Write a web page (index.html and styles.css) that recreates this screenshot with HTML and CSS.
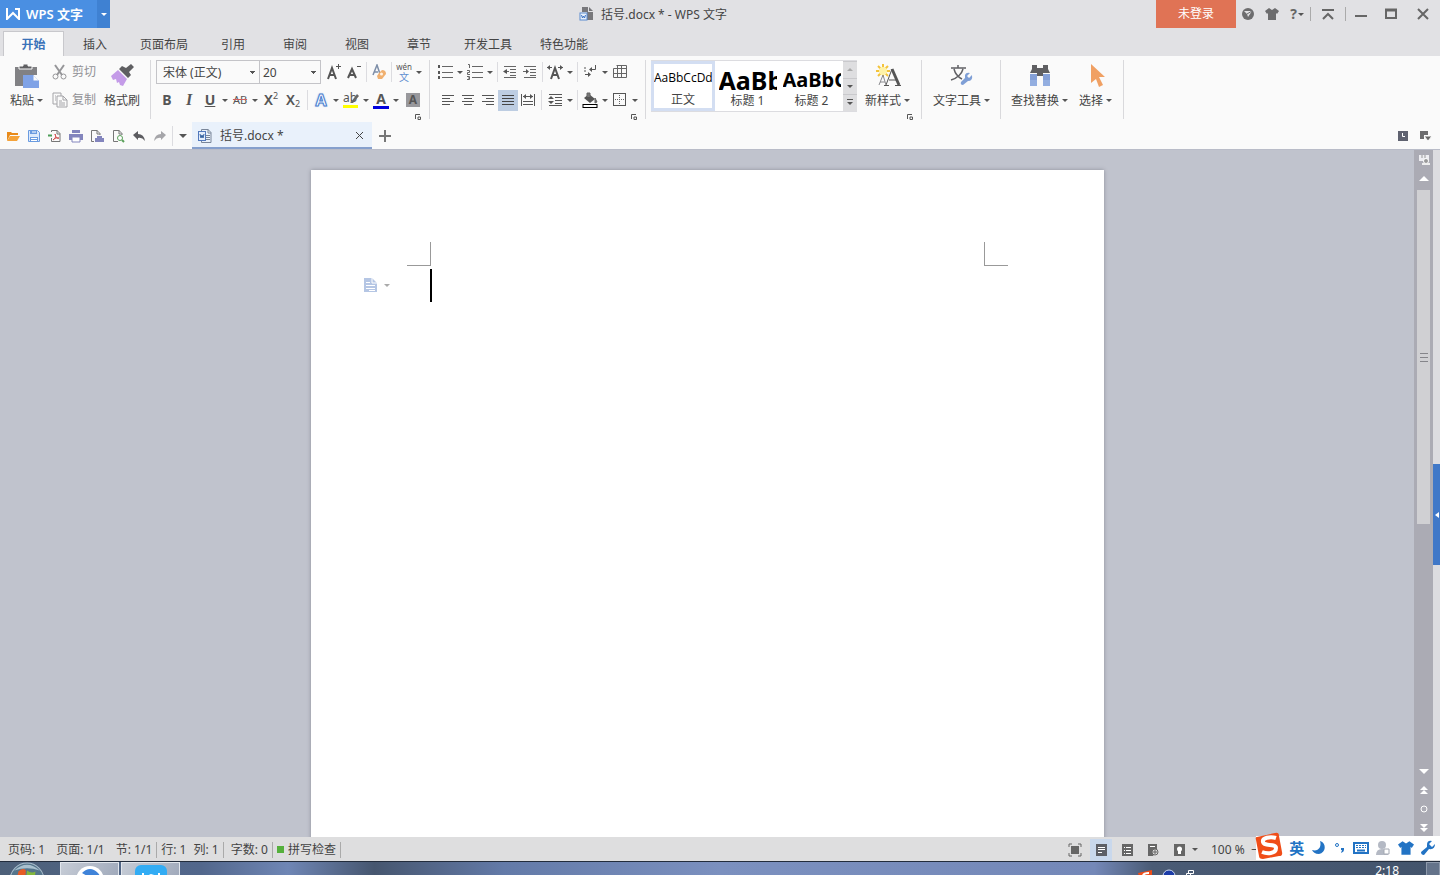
FILE: index.html
```html
<!DOCTYPE html>
<html lang="zh-CN">
<head>
<meta charset="utf-8">
<title>括号.docx * - WPS 文字</title>
<link rel="stylesheet" href="styles.css">
</head>
<body>
<header class="titlebar">
  <button class="brand"><svg width="14" height="12" viewBox="0 0 14 12"><path d="M1 0v11l6-6 6 6V1H9" fill="none" stroke="#fff" stroke-width="2"/></svg><span>WPS 文字</span></button>
  <button class="brand-menu" aria-label="菜单"><i class="tri"></i></button>
  <div class="title"><svg width="16" height="16" viewBox="0 0 16 16"><path d="M3 1h6v5h5v8H8V6H3z" fill="#77777b"/><path d="M10 1l4 4h-4z" fill="#77777b"/><rect x="1" y="7" width="7" height="7" fill="#e8f0fb" stroke="#5b8bd0"/><path d="M2.500 9l1 3 1-2 1 2 1-3" fill="none" stroke="#3a72c4"/></svg><h1>括号.docx * - WPS 文字</h1></div>
  <button class="login">未登录</button>
  <nav class="window-tools">
    <button aria-label="皮肤中心"><svg width="14" height="14" viewBox="0 0 14 14"><circle cx="7" cy="7" r="6" fill="#6c6c6e"/><path d="M3 4l8 0-4 6-1-3z" fill="#e1e1e4"/><path d="M6 7l5-3" stroke="#6c6c6e"/></svg></button>
    <button aria-label="换肤"><svg width="14" height="14" viewBox="0 0 14 14"><path d="M4 1l3 2 3-2 4 3-2 3-1-1v7H3V6L2 7 0 4z" fill="#6c6c6e"/></svg></button>
    <button class="help" aria-label="帮助"><b>?</b><i class="tri"></i></button>
    <span class="tool-line"></span>
    <button class="fold" aria-label="折叠功能区"><svg width="14" height="14" viewBox="0 0 14 14"><path d="M1 3h12M2 12l5-5 5 5" fill="none" stroke="#666" stroke-width="2"/></svg></button>
    <span class="tool-line"></span>
    <button class="win" aria-label="最小化"><svg width="14" height="14" viewBox="0 0 14 14"><path d="M1 9h12" stroke="#666" stroke-width="2"/></svg></button>
    <button class="win" aria-label="最大化"><svg width="14" height="14" viewBox="0 0 14 14"><path d="M2 3h10v8H2z" fill="none" stroke="#666" stroke-width="2"/><path d="M1 3h12" stroke="#666" stroke-width="3"/></svg></button>
    <button class="win close" aria-label="关闭"><svg width="14" height="14" viewBox="0 0 14 14"><path d="M2 2l10 10M12 2L2 12" stroke="#666" stroke-width="2"/></svg></button>
  </nav>
</header>

<nav class="menu">
  <button class="active">开始</button><button>插入</button><button class="wide">页面布局</button><button>引用</button><button>审阅</button><button>视图</button><button>章节</button><button class="wide">开发工具</button><button class="wide">特色功能</button>
</nav>

<section class="ribbon">
  <div class="group clipboard">
    <button class="big"><svg width="26" height="26" viewBox="0 0 26 26"><path d="M1 4h22v8H9v11H1z" fill="#818184"/><path d="M5 6V3h4V1h5v2h4v3z" fill="#5f5f62" stroke="#fafafa"/><path d="M9 12h10l6 6v7H9z" fill="#7fa2e6"/><path d="M19 12v6h6" fill="#fafafa" stroke="#7fa2e6"/></svg><span>粘贴<i class="tri"></i></span></button>
    <div class="stack">
      <button class="muted"><svg width="16" height="16" viewBox="0 0 16 16"><path d="M3 1l7 10M12 1L5 11" stroke="#969699" stroke-width="2"/><circle cx="3.500" cy="12.500" r="2.500" fill="none" stroke="#969699"/><circle cx="11.500" cy="12.500" r="2.500" fill="none" stroke="#969699"/></svg>剪切</button>
      <button class="muted"><svg width="16" height="16" viewBox="0 0 16 16"><path d="M5 12H1V1h8v3M5 4h6l4 4v7H5zM11 4v4h4M7 9h3M7 11h6M7 13h6M3 4h1M3 6h1M3 8h1" fill="none" stroke="#a4a4a8"/></svg>复制</button>
    </div>
    <button class="big"><svg width="26" height="26" viewBox="0 0 26 26"><path d="M22 1l3 3-5 5 2 3-3 3-9-9 3-3 4 2z" fill="#5f5f62"/><path d="M9 7l9 9-4 7-3-1-1-3-2 1-1-4-3 1-2-4z" fill="#c49be8"/></svg><span>格式刷</span></button>
  </div>

  <div class="group font">
    <div class="row">
      <select class="font-name" aria-label="字体"><option>宋体 (正文)</option></select><select class="font-size" aria-label="字号"><option>20</option></select>
      <button class="tool first" aria-label="增大字号"><svg width="16" height="16" viewBox="0 0 16 16"><path d="M2 15L6 4l4 11M3 11h6" fill="none" stroke="#555" stroke-width="2"/><path d="M12.500 0v5M10 2.500h5" stroke="#555"/></svg></button>
      <button class="tool" aria-label="减小字号"><svg width="16" height="16" viewBox="0 0 16 16"><path d="M2 14L6 5l4 9M3 11h6" fill="none" stroke="#555" stroke-width="2"/><path d="M11 2.500h4" stroke="#555"/></svg></button>
      <i class="line"></i>
      <button class="tool" aria-label="清除格式"><svg width="16" height="16" viewBox="0 0 16 16"><path d="M2 11L6 1l3 9M3 8h4" fill="none" stroke="#7d8ea8" stroke-width="1.500"/><path d="M8 9l3-3q4 0 4 4l-4 5H7l-1-3z" fill="#f0b070"/><circle cx="10.500" cy="10" r="1.500" fill="#fff3e5"/></svg></button>
      <i class="line"></i>
      <button class="tool pinyin" aria-label="拼音指南"><small>wén</small><em>文</em></button><button class="caret" aria-label="更多拼音"></button>
    </div>
    <div class="row">
      <button class="tool w22 letter"><b>B</b></button><button class="tool w22 letter italic"><b>I</b></button><button class="tool letter under"><b>U</b></button><button class="caret" aria-label="下划线样式"></button>
      <button class="tool strike">AB</button><button class="caret" aria-label="删除线样式"></button>
      <button class="tool w22 script">X<sup>2</sup></button><button class="tool w22 script">X<sub>2</sub></button>
      <i class="line w7"></i>
      <button class="tool outline-a">A</button><button class="caret" aria-label="文字效果"></button>
      <button class="tool" aria-label="突出显示"><svg width="18" height="18" viewBox="0 0 18 18"><text x="1" y="11" class="svg-ab">ab</text><path d="M9 11l6-8 2 2-6 7H8z" fill="#666"/><path d="M1 14h15v3H1z" fill="#ff0"/></svg></button><button class="caret" aria-label="突出颜色"></button>
      <button class="tool color-a">A</button><button class="caret" aria-label="字体颜色选择"></button>
      <button class="tool w24"><span class="shade-a">A</span></button>
    </div>
    <button class="launcher" aria-label="字体设置"><svg width="6" height="6" viewBox="0 0 6 6"><path d="M.5 5V.5H5M3 3h2.500v2.500H3z" fill="none" stroke="#555"/></svg></button>
  </div>

  <div class="group para">
    <div class="row">
      <button class="tool" aria-label="项目符号"><svg width="16" height="16" viewBox="0 0 16 16"><path d="M5 2.500h11M5 8.500h11M5 13.500h11" stroke="#666"/><path d="M1 1h2v3H1zM1 7h2v3H1zM1 12h2v3H1z" fill="#555"/></svg></button><button class="caret" aria-label="更多项目符号"></button>
      <button class="tool" aria-label="编号"><svg width="16" height="16" viewBox="0 0 16 16"><path d="M5 2.500h11M5 8.500h11M5 13.500h11M1 .5h1.500V4M0 6.500h2.500v2H.5v2H3M0 12.500h2.500v3H0M1 14h1" fill="none" stroke="#666"/></svg></button><button class="caret" aria-label="更多编号"></button>
      <i class="line"></i>
      <button class="tool" aria-label="减少缩进"><svg width="14" height="14" viewBox="0 0 14 14"><path d="M1 1.500h12M7 4.500h6M7 7.500h6M7 10.500h6M1 12.500h12M1 6.500h5" stroke="#666"/><path d="M0 6.500L4 4v5z" fill="#555"/></svg></button>
      <button class="tool" aria-label="增加缩进"><svg width="14" height="14" viewBox="0 0 14 14"><path d="M1 1.500h12M7 4.500h6M7 7.500h6M7 10.500h6M1 12.500h12M0 6.500h4" stroke="#666"/><path d="M6 6.500L3 4v5z" fill="#555"/></svg></button>
      <i class="line"></i>
      <button class="tool" aria-label="字符缩放"><svg width="16" height="16" viewBox="0 0 16 16"><path d="M4 15L8 4l4 11M5 11h6" fill="none" stroke="#555" stroke-width="2"/><path d="M0 3.500h5M11 3.500h5" stroke="#555"/><path d="M0 3.500L3 1v5zM16 3.500L13 1v5z" fill="#555"/></svg></button><button class="caret" aria-label="更多缩放"></button>
      <i class="line"></i>
      <button class="tool" aria-label="换行标记"><svg width="16" height="14" viewBox="0 0 16 14"><path d="M13.500 0v4.500H8M3 9.500h4M2 3h2M2 6h2" fill="none" stroke="#555"/><path d="M7 4.500L10 2v5zM9 9.500L6 7v5z" fill="#555"/></svg></button><button class="caret" aria-label="更多标记"></button>
      <button class="tool" aria-label="插入表格"><svg width="16" height="16" viewBox="0 0 16 16"><path d="M4.500 1.500h10v12H1.500v-9h13M1.500 9.500h13M5.500 1v12M9.500 1v12" fill="none" stroke="#666"/></svg></button>
    </div>
    <div class="row aligns">
      <button class="tool" aria-label="左对齐"><svg width="14" height="12" viewBox="0 0 14 12"><path d="M1 1.500h12M1 4.500h8M1 7.500h12M1 10.500h8" stroke="#555"/></svg></button>
      <button class="tool" aria-label="居中"><svg width="14" height="12" viewBox="0 0 14 12"><path d="M1 1.500h12M3 4.500h8M1 7.500h12M3 10.500h8" stroke="#555"/></svg></button>
      <button class="tool" aria-label="右对齐"><svg width="14" height="12" viewBox="0 0 14 12"><path d="M1 1.500h12M5 4.500h8M1 7.500h12M5 10.500h8" stroke="#555"/></svg></button>
      <button class="tool on" aria-label="两端对齐"><svg width="14" height="12" viewBox="0 0 14 12"><path d="M1 1.500h12M1 4.500h12M1 7.500h12M1 10.500h12" stroke="#444"/></svg></button>
      <button class="tool" aria-label="分散对齐"><svg width="16" height="14" viewBox="0 0 16 14"><path d="M1.500 1v12M14.500 1v12M3 3.500h10M3 8.500h10M3 11.500h10" stroke="#555"/><path d="M3 3.500L6 1v5zM13 3.500L10 1v5z" fill="#555"/></svg></button>
      <i class="line w7"></i>
      <button class="tool" aria-label="行距"><svg width="14" height="14" viewBox="0 0 14 14"><path d="M1 1.500h13M7 4.500h7M7 7.500h7M7 10.500h7M1 12.500h13" stroke="#555"/><path d="M0 6l3-3 3 3zM0 8l3 3 3-3z" fill="#555"/></svg></button><button class="caret" aria-label="行距选项"></button>
      <i class="line"></i>
      <button class="tool" aria-label="底纹"><svg width="16" height="16" viewBox="0 0 16 16"><path d="M2 6l5-4 6 5-5 4z" fill="#555"/><path d="M5 5V1h3v4M13 6l2 4-2 1z" fill="#777" stroke="#666"/><rect x="1" y="12.500" width="14" height="3" fill="#fff" stroke="#000"/></svg></button><button class="caret" aria-label="底纹颜色"></button>
      <button class="tool" aria-label="边框"><svg width="14" height="14" viewBox="0 0 14 14"><rect x=".5" y=".5" width="12" height="12" fill="none" stroke="#555"/><path d="M6.500 2v10M2 6.500h10" stroke="#666" stroke-dasharray="1 1"/></svg></button><button class="caret" aria-label="边框样式"></button>
    </div>
    <button class="launcher" aria-label="段落设置"><svg width="6" height="6" viewBox="0 0 6 6"><path d="M.5 5V.5H5M3 3h2.500v2.500H3z" fill="none" stroke="#555"/></svg></button>
  </div>

  <div class="group styles">
    <div class="gallery">
      <button class="style chosen"><span class="sample">AaBbCcDd</span><span>正文</span></button>
      <button class="style"><span class="sample h1">AaBb</span><span>标题 1</span></button>
      <button class="style"><span class="sample h2">AaBbC</span><span>标题 2</span></button>
      <div class="gallery-scroll"><button class="dim" aria-label="上一行"><i class="tri up"></i></button><button aria-label="下一行"><i class="tri"></i></button><button aria-label="展开样式"><i class="tri bar"></i></button></div>
    </div>
    <button class="big new-style"><svg width="26" height="26" viewBox="0 0 26 26"><path d="M8 1v13M1 8h14M3 3l10 10M13 3L3 13" stroke="#f3c33c" stroke-width="2"/><circle cx="8" cy="8" r="4" fill="#fff3a8"/><path d="M17 6l7 16" stroke="#555" stroke-width="3"/><path d="M11 22l6-16M14 17h8M9 22.500h5M20 22.500h6" fill="none" stroke="#555"/><path d="M4 22l4-10 3 10M5 19h5" fill="none" stroke="#8a8a8e"/></svg><span>新样式<i class="tri"></i></span></button>
    <button class="launcher" aria-label="样式设置"><svg width="6" height="6" viewBox="0 0 6 6"><path d="M.5 5V.5H5M3 3h2.500v2.500H3z" fill="none" stroke="#555"/></svg></button>
  </div>

  <div class="group texttool">
    <button class="big"><svg width="26" height="26" viewBox="0 0 26 26"><path d="M3 5h15M10 2v3M6 6c1 4 4 8 8 10M15 6c-1 4-5 9-12 11" fill="none" stroke="#606064" stroke-width="1.500"/><path d="M24 12l-3 3-2-2 3-3q-4-1-5 2v3l-4 4q-1 3 2 3l5-4q5 0 4-6z" fill="#7f9fd6"/></svg><span>文字工具<i class="tri"></i></span></button>
  </div>
  <div class="group find">
    <button class="big"><svg width="26" height="26" viewBox="0 0 26 26"><path d="M5 2h5v3h6V2h5v4l2 4h-7v3h-6v-3H3l2-4z" fill="#5f5f62"/><path d="M3 11h7v12H3zM16 11h7v12h-7z" fill="#84a0d8"/><path d="M3 17h7v6H3zM16 17h7v6h-7z" fill="#93aee0"/></svg><span>查找替换<i class="tri"></i></span></button>
    <button class="big"><svg width="26" height="26" viewBox="0 0 26 26"><path d="M8 1l14 13h-6l4 8-4 2-3-8-5 4z" fill="#f0a063"/></svg><span>选择<i class="tri"></i></span></button>
  </div>
</section>

<section class="tabs">
  <div class="quick">
    <button aria-label="打开"><svg width="14" height="14" viewBox="0 0 14 14"><path d="M1 12V3h4l1 1h6v2H4z" fill="#e88a1a"/><path d="M4 7h10l-3 5H1z" fill="#f5a33a"/></svg></button>
    <button aria-label="保存"><svg width="14" height="14" viewBox="0 0 14 14"><path d="M1.500 1.500h9l2 2v9h-11z" fill="#dce9fb" stroke="#6a9be0"/><path d="M3 1h7v4H3zM3 8h8v5H3z" fill="#6a9be0"/><path d="M4 9.500h6M4 11.500h6M5 3h4" stroke="#fff"/></svg></button>
    <button aria-label="输出PDF"><svg width="14" height="14" viewBox="0 0 14 14"><path d="M3.500 3V1.500H9l3 3v8H3.500V9M9 1v4h3" fill="none" stroke="#777"/><path d="M5 11c3-2 3-4 2-6 1 4 2 5 4 4-3-1-5 1-6 2" fill="none" stroke="#d24b4b"/><path d="M0 6.500h4" stroke="#4d9e58" stroke-width="2"/></svg></button>
    <button aria-label="打印"><svg width="14" height="14" viewBox="0 0 14 14"><path d="M3 1h8v3H3zM0 5h14v6H0z" fill="#8385bd"/><path d="M3 8h8v5H3z" fill="#fff" stroke="#8385bd"/></svg></button>
    <button aria-label="直接打印"><svg width="14" height="14" viewBox="0 0 14 14"><path d="M4 12.500H1.500v-11H7l3 3V6M7 1v4h3" fill="none" stroke="#777"/><path d="M5 9h9v4H5zM7 7h5v2H7z" fill="#8385bd"/></svg></button>
    <button aria-label="打印预览"><svg width="14" height="14" viewBox="0 0 14 14"><path d="M7 12.500H2.500v-11H8l3 3V6M8 1v4h3" fill="none" stroke="#777"/><circle cx="9" cy="9" r="2.500" fill="#fff" stroke="#5aa05a"/><path d="M11 11l2 2" stroke="#5aa05a" stroke-width="2"/></svg></button>
    <button aria-label="撤销"><svg width="14" height="14" viewBox="0 0 14 14"><path d="M1 6l5-4v3q6 0 7 7-3-4-7-3v2z" fill="#5c5c60"/></svg></button>
    <button aria-label="恢复"><svg width="14" height="14" viewBox="0 0 14 14"><path d="M13 6L8 2v3q-6 0-7 7 3-4 7-3v2z" fill="#a5a5a9"/></svg></button>
    <i class="line"></i>
    <button class="more" aria-label="自定义"><i class="tri large"></i></button>
  </div>
  <div class="doc-tab"><svg width="16" height="16" viewBox="0 0 16 16"><path d="M4.500 3V1.500H11l3 3v10H4.500V13M11 1v4h3M9 7.500h4M9 9.500h4M9 11.500h4" fill="none" stroke="#7a8699"/><rect x="1.500" y="3.500" width="7" height="9" fill="#e4edfb" stroke="#5279bd"/><path d="M3 6l1 4 1-3 1 3 1-4" fill="none" stroke="#33619f"/></svg><span>括号.docx *</span><button aria-label="关闭文档"><svg width="9" height="9" viewBox="0 0 9 9"><path d="M1 1l7 7M8 1L1 8" stroke="#444"/></svg></button></div>
  <button class="add-tab" aria-label="新建"><svg width="12" height="12" viewBox="0 0 12 12"><path d="M6 0v12M0 6h12" stroke="#777" stroke-width="2"/></svg></button>
  <div class="tab-end">
    <button aria-label="最近文档"><svg width="12" height="12" viewBox="0 0 12 12"><rect x="1" y="1" width="10" height="10" fill="#5f6270"/><path d="M5.500 3v3.500H8" fill="none" stroke="#fff"/></svg></button>
    <button aria-label="文档列表"><svg width="14" height="12" viewBox="0 0 14 12"><path d="M1 1h8v4H5v4H1z" fill="#6c6c6e"/><path d="M5 6h8l-4 5z" fill="#666" stroke="#fafafa"/></svg></button>
  </div>
</section>

<main class="workspace">
  <div class="canvas">
    <article class="page">
      <div class="marks"><span class="mark left"></span><span class="mark right"></span></div>
      <div class="first-line"><button class="paste-tag" aria-label="段落布局"><svg width="14" height="16" viewBox="0 0 14 16"><path d="M0 0h8l5 5v9H0z" fill="#b5c6e4"/><path d="M8 0v5h5M2 4.500h4M2 7.500h9M2 10.500h9M5 12.500h6" fill="none" stroke="#fff"/></svg><i class="tri pale"></i></button><span class="cursor"></span></div>
    </article>
  </div>
  <div class="scrollbar">
    <button aria-label="浏览对象"><svg width="12" height="12" viewBox="0 0 12 12"><path d="M1 1h10v6H1z" fill="#eeeef2"/><path d="M4 1v3M7 1v3" stroke="#999"/><circle cx="8" cy="7" r="2.500" fill="#999" stroke="#fff"/><path d="M4 9h8v2H4z" fill="#eee"/></svg></button>
    <button aria-label="向上"><svg width="10" height="6" viewBox="0 0 10 6"><path d="M0 5l5-5 5 5z" fill="#fff"/></svg></button>
    <div class="track"><div class="thumb"><svg width="8" height="10" viewBox="0 0 8 10"><path d="M0 1.500h8M0 5.500h8M0 9.500h8" stroke="#85858a"/></svg></div></div>
    <button aria-label="向下"><svg width="10" height="6" viewBox="0 0 10 6"><path d="M0 1l5 5 5-5z" fill="#fff"/></svg></button>
    <button aria-label="上一页"><svg width="10" height="10" viewBox="0 0 10 10"><path d="M1 5l4-4 4 4zM1 9l4-4 4 4z" fill="#fff"/></svg></button>
    <button aria-label="选择浏览对象"><svg width="8" height="8" viewBox="0 0 8 8"><circle cx="4" cy="4" r="3" fill="none" stroke="#fff"/></svg></button>
    <button aria-label="下一页"><svg width="10" height="10" viewBox="0 0 10 10"><path d="M1 1l4 4 4-4zM1 5l4 4 4-4z" fill="#fff"/></svg></button>
  </div>
  <div class="edge"><button class="side-pull" aria-label="展开侧栏"><svg width="4" height="6" viewBox="0 0 4 6"><path d="M4 0v6L0 3z" fill="#fff"/></svg></button></div>
</main>

<footer class="status">
  <span class="cell gap">页码: 1</span><span class="cell gap">页面: 1/1</span><span class="cell sep">节: 1/1</span><span class="cell row-no">行: 1</span><span class="cell sep col-no">列: 1</span><span class="cell sep">字数: 0</span><button class="cell sep spell"><i></i>拼写检查</button>
  <div class="views">
    <button aria-label="全屏"><svg width="14" height="14" viewBox="0 0 14 14"><path d="M1 4V1h3M10 1h3v3M13 10v3h-3M4 13H1v-3" fill="none" stroke="#666"/><path d="M3 3h8v8H3z" fill="#666"/></svg></button>
    <button class="on" aria-label="页面视图"><svg width="12" height="12" viewBox="0 0 12 12"><path d="M1 0h11v12H1z" fill="#5d5f66"/><path d="M3 3.500h7M3 5.500h7M3 8.500h4" stroke="#fff"/></svg></button>
    <button aria-label="大纲视图"><svg width="12" height="12" viewBox="0 0 12 12"><path d="M1 0h11v12H1z" fill="#666"/><path d="M3 3.500h1M5 3.500h5M3 6.500h1M5 6.500h5M3 9.500h1M5 9.500h5" stroke="#fff"/></svg></button>
    <button aria-label="Web版式"><svg width="12" height="12" viewBox="0 0 12 12"><path d="M1 0h9v6L6 12H1z" fill="#666"/><path d="M3 2.500h5" stroke="#fff"/><circle cx="8" cy="8" r="3" fill="#ddd" stroke="#666"/><path d="M8 6v4M6 8h4" stroke="#666"/></svg></button>
    <button aria-label="护眼模式"><svg width="12" height="12" viewBox="0 0 12 12"><path d="M1 0h11v12H1z" fill="#666"/><circle cx="6.500" cy="5" r="2.500" fill="#fff"/><path d="M5 7h3v3H5z" fill="#fff"/></svg></button>
    <i class="tri"></i>
    <span class="zoom">100 %</span><button class="minus" aria-label="缩小">−</button>
  </div>
  <div class="ime">
    <svg class="sogou" width="28" height="28" viewBox="0 0 28 28"><path d="M2 5q-2 0-1 3l3 16q0 3 4 3l16-3q4 0 3-4L24 4q0-4-4-3z" fill="#f04d18"/><path d="M21 6C15 4 7 6 8 10c1 5 13 1 13 6 0 6-9 6-14 4" fill="none" stroke="#fff" stroke-width="4"/></svg>
    <b>英</b>
    <svg width="16" height="16" viewBox="0 0 16 16"><path d="M9 1c7 2 6 12-1 13-4 0-6-2-7-4 6 2 10-3 8-9z" fill="#2273c4"/></svg>
    <svg width="14" height="14" viewBox="0 0 14 14"><circle cx="4" cy="4" r="1.500" fill="none" stroke="#2273c4"/><path d="M8 7h3v2q0 2-3 3l1-3H8z" fill="#2273c4"/></svg>
    <svg width="16" height="12" viewBox="0 0 16 12"><rect x="1" y="1" width="14" height="10" fill="#fff" stroke="#2273c4" stroke-width="2"/><path d="M3 3.500h10M3 5.500h10" stroke="#2273c4" stroke-dasharray="2 1"/><path d="M4 8.500h8" stroke="#2273c4" stroke-width="2"/></svg>
    <svg width="16" height="16" viewBox="0 0 16 16"><circle cx="7" cy="5" r="4" fill="#b4b9c4"/><path d="M1 15q0-6 6-6t6 6z" fill="#b4b9c4"/><path d="M9 9h5v5H9z" fill="#fff" stroke="#a3a8b2"/></svg>
    <svg width="16" height="16" viewBox="0 0 14 14"><path d="M4 1l3 2 3-2 4 3-2 3-1-1v7H3V6L2 7 0 4z" fill="#2273c4"/></svg>
    <svg width="16" height="16" viewBox="0 0 16 16"><path d="M15 4l-3 3-3-3 3-3Q7 0 7 5v2l-6 5q0 3 3 3l5-6q6 1 6-5z" fill="#2273c4"/></svg>
  </div>
</footer>

<div class="taskbar">
  <button class="orb" aria-label="开始菜单"><svg width="36" height="36" viewBox="0 0 34 34"><circle cx="17" cy="17" r="16" fill="#55758c" stroke="#a8bccb"/><path d="M5 8q12-11 24 0-12-4-24 0z" fill="#a9c0ce"/><path d="M9 9q4-4 7-1l-1 9H7z" fill="#e65b25"/><path d="M17 8q4 3 8 1l-1 9-8-1z" fill="#83b83d"/></svg></button>
  <button class="task" aria-label="浏览器"><svg width="30" height="30" viewBox="0 0 30 30"><circle cx="15" cy="15" r="14" fill="#fff"/><path d="M7 8q8-8 16 0 5 6 2 12-3-7-9-6-5-4-9-6z" fill="#3f83d9"/></svg></button>
  <button class="task" aria-label="应用"><svg width="32" height="30" viewBox="0 0 32 30"><rect width="32" height="30" rx="6" fill="#32acf4"/><path d="M8 8v6M14 11l2-1 3 1M24 8v6" stroke="#fff" stroke-width="2"/></svg></button>
  <div class="tray">
    <svg width="16" height="10" viewBox="0 0 16 10"><path d="M1 4l14-3v9H3z" fill="#f04d18"/><path d="M12 4q-6 0-6 3 3 2 6 1" fill="none" stroke="#fff" stroke-width="2"/></svg>
    <svg width="14" height="10" viewBox="0 0 14 10"><circle cx="7" cy="7" r="6" fill="#1c3ca8" stroke="#ccd9f2"/></svg>
    <svg width="10" height="10" viewBox="0 0 10 10"><path d="M3.500 1.500h5v3h-5zM1.500 4.500h4v3h-4z" fill="none" stroke="#fff"/></svg>
  </div>
  <time>2:18</time>
  <button class="show-desktop" aria-label="显示桌面"></button>
</div>
</body>
</html>
```
FILE: styles.css
```css
* { box-sizing: border-box; }
body {
  margin: 0;
  height: 100vh;
  display: flex;
  flex-direction: column;
  overflow: hidden;
  background: #e1e1e4;
  color: #444;
  font: 12px/16px "Noto Sans", "Noto Sans CJK SC", sans-serif;
}
button, select {
  margin: 0;
  padding: 0;
  border: 0;
  background: none;
  color: inherit;
  font: inherit;
}
button { display: flex; align-items: center; justify-content: center; flex: none; }
svg { display: block; flex: none; }

.tri {
  display: inline-block;
  flex: none;
  border: 3px solid transparent;
  border-top-color: #555;
  border-bottom: 0;
}
.tri.up { border-top: 0; border-bottom: 3px solid #aaa; }
.tri.large { border-width: 4px 4px 0; }
.tri.pale { border-top-color: #aaa; }
.tri.bar { position: relative; }
.tri.bar::before { content: ""; position: absolute; left: -3px; top: -6px; width: 6px; height: 1px; background: #555; }

/* Title bar */
.titlebar { position: relative; display: flex; height: 28px; flex: none; }
.brand { width: 97px; justify-content: flex-start; gap: 6px; padding-left: 6px; background: #4a8fe2; color: #fff; font-size: 13px; font-weight: 600; }
.brand-menu { width: 13px; background: #3f81d2; }
.brand-menu .tri { border-top-color: #fff; }
.title { flex: 1; display: flex; align-items: center; justify-content: center; gap: 6px; padding-left: 40px; }
.title h1 { margin: 0; padding-top: 1px; font-size: 12px; font-weight: 400; }
.login { width: 80px; background: #e07355; color: #fff; }
.window-tools { display: flex; align-items: center; width: 204px; }
.window-tools button { width: 24px; height: 28px; }
.window-tools .help { width: 26px; gap: 1px; font-size: 14px; color: #666; }
.window-tools .fold { width: 34px; }
.window-tools .win { width: 30px; }
.window-tools .close { width: 34px; }
.tool-line { width: 1px; height: 14px; background: #aaa; }

/* Menu tabs */
.menu { display: flex; height: 28px; flex: none; padding: 3px 0 0 3px; }
.menu button { width: 62px; padding-top: 2px; }
.menu .wide { width: 76px; }
.menu .active { width: 61px; border: 1px solid #c8c8cc; border-bottom: 0; background: #fafafa; color: #3a72b8; font-weight: 600; }

/* Ribbon */
.ribbon { display: flex; height: 66px; flex: none; background: #fafafa; }
.group { position: relative; display: flex; flex: none; padding-top: 4px; }
.group::after { content: ""; position: absolute; right: 0; top: 4px; bottom: 3px; width: 1px; background: #d9d9dc; }
.clipboard { width: 151px; padding-left: 10px; }
.font, .para { flex-direction: column; gap: 4px; }
.font { width: 279px; padding-left: 5px; }
.para { width: 216px; padding-left: 5px; }
.styles { width: 276px; padding-left: 5px; }
.texttool { width: 79px; justify-content: center; }
.find { width: 123px; padding-left: 10px; gap: 11px; }
.row { display: flex; align-items: center; height: 24px; }
.aligns { padding-left: 3px; }
.big { flex-direction: column; justify-content: flex-start; height: 52px; padding-top: 3px; gap: 4px; white-space: nowrap; }
.big .tri { margin: 0 0 3px 3px; }
.stack { display: flex; flex-direction: column; gap: 4px; margin: 0 8px 0 9px; }
.stack button { height: 24px; gap: 4px; color: #909094; }
.launcher { position: absolute; right: 9px; bottom: 2px; width: 6px; height: 6px; }
.font-name, .font-size {
  height: 24px;
  padding: 1px 6px 0;
  border: 1px solid #c4c4c8;
  border-radius: 0;
  appearance: none;
  background: conic-gradient(from -45deg at 50% 100%, #555 90deg, transparent 0) right 3px center / 7px 3px no-repeat;
}
.font-name { width: 104px; }
.font-size { width: 61px; border-left: 0; padding-left: 3px; }
.tool { width: 20px; height: 21px; color: #555; }
.tool.first { margin-left: 3px; }
.w22 { width: 22px; }
.w24 { width: 24px; }
.on { background: #bdcde2; }
.caret { width: 10px; height: 20px; }
.caret::after { content: ""; border: 3px solid transparent; border-top-color: #555; border-bottom: 0; }
.line { width: 5px; height: 20px; flex: none; background: linear-gradient(#dcdce0, #dcdce0) center / 1px 100% no-repeat; }
.line.w7 { width: 7px; }
.letter { font-size: 14px; }
.italic { font-family: "Liberation Serif", serif; font-style: italic; font-size: 16px; }
.under b { text-decoration: underline; }
.strike { font-size: 11px; text-decoration: line-through; text-decoration-color: #d06060; }
.script { height: 16px; font-size: 14px; font-weight: 600; }
.script sup, .script sub { font-size: 9px; line-height: 8px; font-weight: 400; }
.script sup { align-self: flex-start; }
.script sub { align-self: flex-end; }
.pinyin { flex-direction: column; }
.pinyin small { font-size: 8px; line-height: 10px; }
.pinyin em { font-style: normal; color: #5f8fd0; font-size: 10px; line-height: 11px; }
.outline-a { font-size: 16px; font-weight: 700; color: #fff; -webkit-text-stroke: 1px #4a7fd0; text-shadow: 0 0 2px #4a7fd0; }
.svg-ab { font-size: 12px; fill: #555; }
.color-a { height: 18px; width: 16px; margin: 0 2px; border-bottom: 3px solid #00d; font-size: 14px; font-weight: 700; }
.shade-a { width: 14px; height: 14px; background: #98989c; font-weight: 700; line-height: 14px; }

.gallery { display: flex; height: 52px; border: 1px solid #dcdce0; border-width: 1px 0; background: #fff; }
.style { width: 64px; flex-direction: column; gap: 3px; padding: 5px 2px 0 3px; overflow: hidden; }
.style .sample { width: 58px; height: 22px; overflow: hidden; color: #000; font: 12px/22px "Open Sans", sans-serif; text-align: left; white-space: nowrap; }
.style .h1 { font: 700 25px/24px "Noto Sans", sans-serif; }
.style .h2 { font: 700 20px/24px "Noto Sans", sans-serif; }
.style.chosen { border: 3px solid #d3def2; padding: 2px 0 0; }
.gallery-scroll { display: flex; flex-direction: column; width: 14px; background: #dedee0; }
.gallery-scroll button { flex: 1; border-top: 1px solid #c9c9cc; }
.new-style { margin-left: 8px; }

/* Document tabs */
.tabs { display: flex; height: 28px; flex: none; background: #fafafa; border-bottom: 1px solid #b9bcc8; }
.quick { display: flex; align-items: center; width: 192px; padding-left: 2px; }
.quick button { width: 21px; height: 24px; }
.quick .more { width: 16px; }
.doc-tab { display: flex; align-items: center; width: 180px; padding: 2px 7px 0 5px; gap: 7px; background: #e9f1fb; border-bottom: 2px solid #86a0cd; }
.doc-tab span { flex: 1; }
.doc-tab button { width: 11px; height: 16px; }
.add-tab { width: 26px; }
.tab-end { display: flex; gap: 10px; margin-left: auto; padding-right: 7px; }

/* Workspace */
.workspace { display: flex; flex: 1; min-height: 0; background: #c0c3cd; }
.canvas { flex: 1; display: flex; justify-content: center; align-items: flex-start; padding-top: 20px; overflow: hidden; }
.page { width: 793px; min-height: 1122px; padding-top: 72px; background: #fff; box-shadow: 0 0 4px #8b8e99; }
.marks { display: flex; justify-content: space-between; padding: 0 96px; }
.mark { width: 24px; height: 24px; border: 0 solid #999; border-bottom-width: 1px; }
.mark.left { border-right-width: 1px; }
.mark.right { border-left-width: 1px; }
.first-line { display: flex; align-items: center; height: 33px; margin-top: 3px; padding-left: 53px; }
.paste-tag { width: 66px; justify-content: flex-start; gap: 6px; }
.cursor { width: 2px; height: 33px; background: #000; }
.scrollbar { display: flex; flex-direction: column; align-items: center; width: 19px; background: #ababb4; }
.scrollbar button { width: 18px; height: 19px; }
.track { flex: 1; width: 13px; padding-top: 2px; }
.thumb { display: flex; align-items: center; justify-content: center; height: 58%; min-height: 334px; background: #d0d0d3; }
.edge { display: flex; align-items: center; width: 7px; padding-top: 42px; background: #dcdce0; }
.side-pull { width: 7px; height: 101px; background: #4078c8; }

/* Status bar */
.status { position: relative; display: flex; align-items: center; height: 24px; flex: none; padding: 1px 0 0 8px; background: #dededf; }
.cell { flex: none; white-space: nowrap; }
.gap { margin-right: 11px; }
.sep { padding-right: 4px; border-right: 1px solid #aaa; margin-right: 4px; }
.row-no { margin-right: 7px; }
.col-no { margin-right: 7px; }
.spell { gap: 4px; }
.spell i { width: 7px; height: 7px; background: #55b03c; }
.views { display: flex; align-items: center; margin-left: auto; width: 376px; }
.views button { width: 22px; height: 22px; margin-right: 4px; }
.views .on { background: #c9d8ec; }
.views .tri { margin-left: -2px; }
.zoom { margin-left: 13px; }
.views .minus { width: 10px; margin-left: 5px; }
.ime { position: absolute; right: 0; top: -1px; display: flex; align-items: center; justify-content: space-between; width: 184px; height: 24px; padding-right: 4px; background: #fff; }
.ime b { color: #2273c4; font-size: 15px; }
.sogou { margin: -4px 0 0 -1px; }

/* Desktop taskbar */
.taskbar {
  display: flex;
  align-items: flex-start;
  height: 14px;
  flex: none;
  overflow: hidden;
  border-top: 1px solid #222c3c;
  background: linear-gradient(90deg, #4d6079 0, #52678c 14%, #6f86b5 20%, #46566f 26%, #637aa8 35%, #7b90bf 50%, #7488b8 76%, #4a5b75 80%, #43546c 100%);
}
.orb { width: 54px; margin-right: 6px; }
.task { align-items: flex-start; width: 59px; height: 40px; margin-right: 2px; padding-top: 1px; border: 1px solid #e1e6ed; background: linear-gradient(120deg, #c6ccd6, #98a2b5); }
.task svg { margin-top: 1px; }
.tray { display: flex; gap: 9px; margin-left: auto; padding-top: 7px; }
.taskbar time { margin: 1px 27px 0 180px; color: #fff; }
.show-desktop { width: 14px; height: 40px; border: 1px solid #8e9aac; background: #64738a; }
```
